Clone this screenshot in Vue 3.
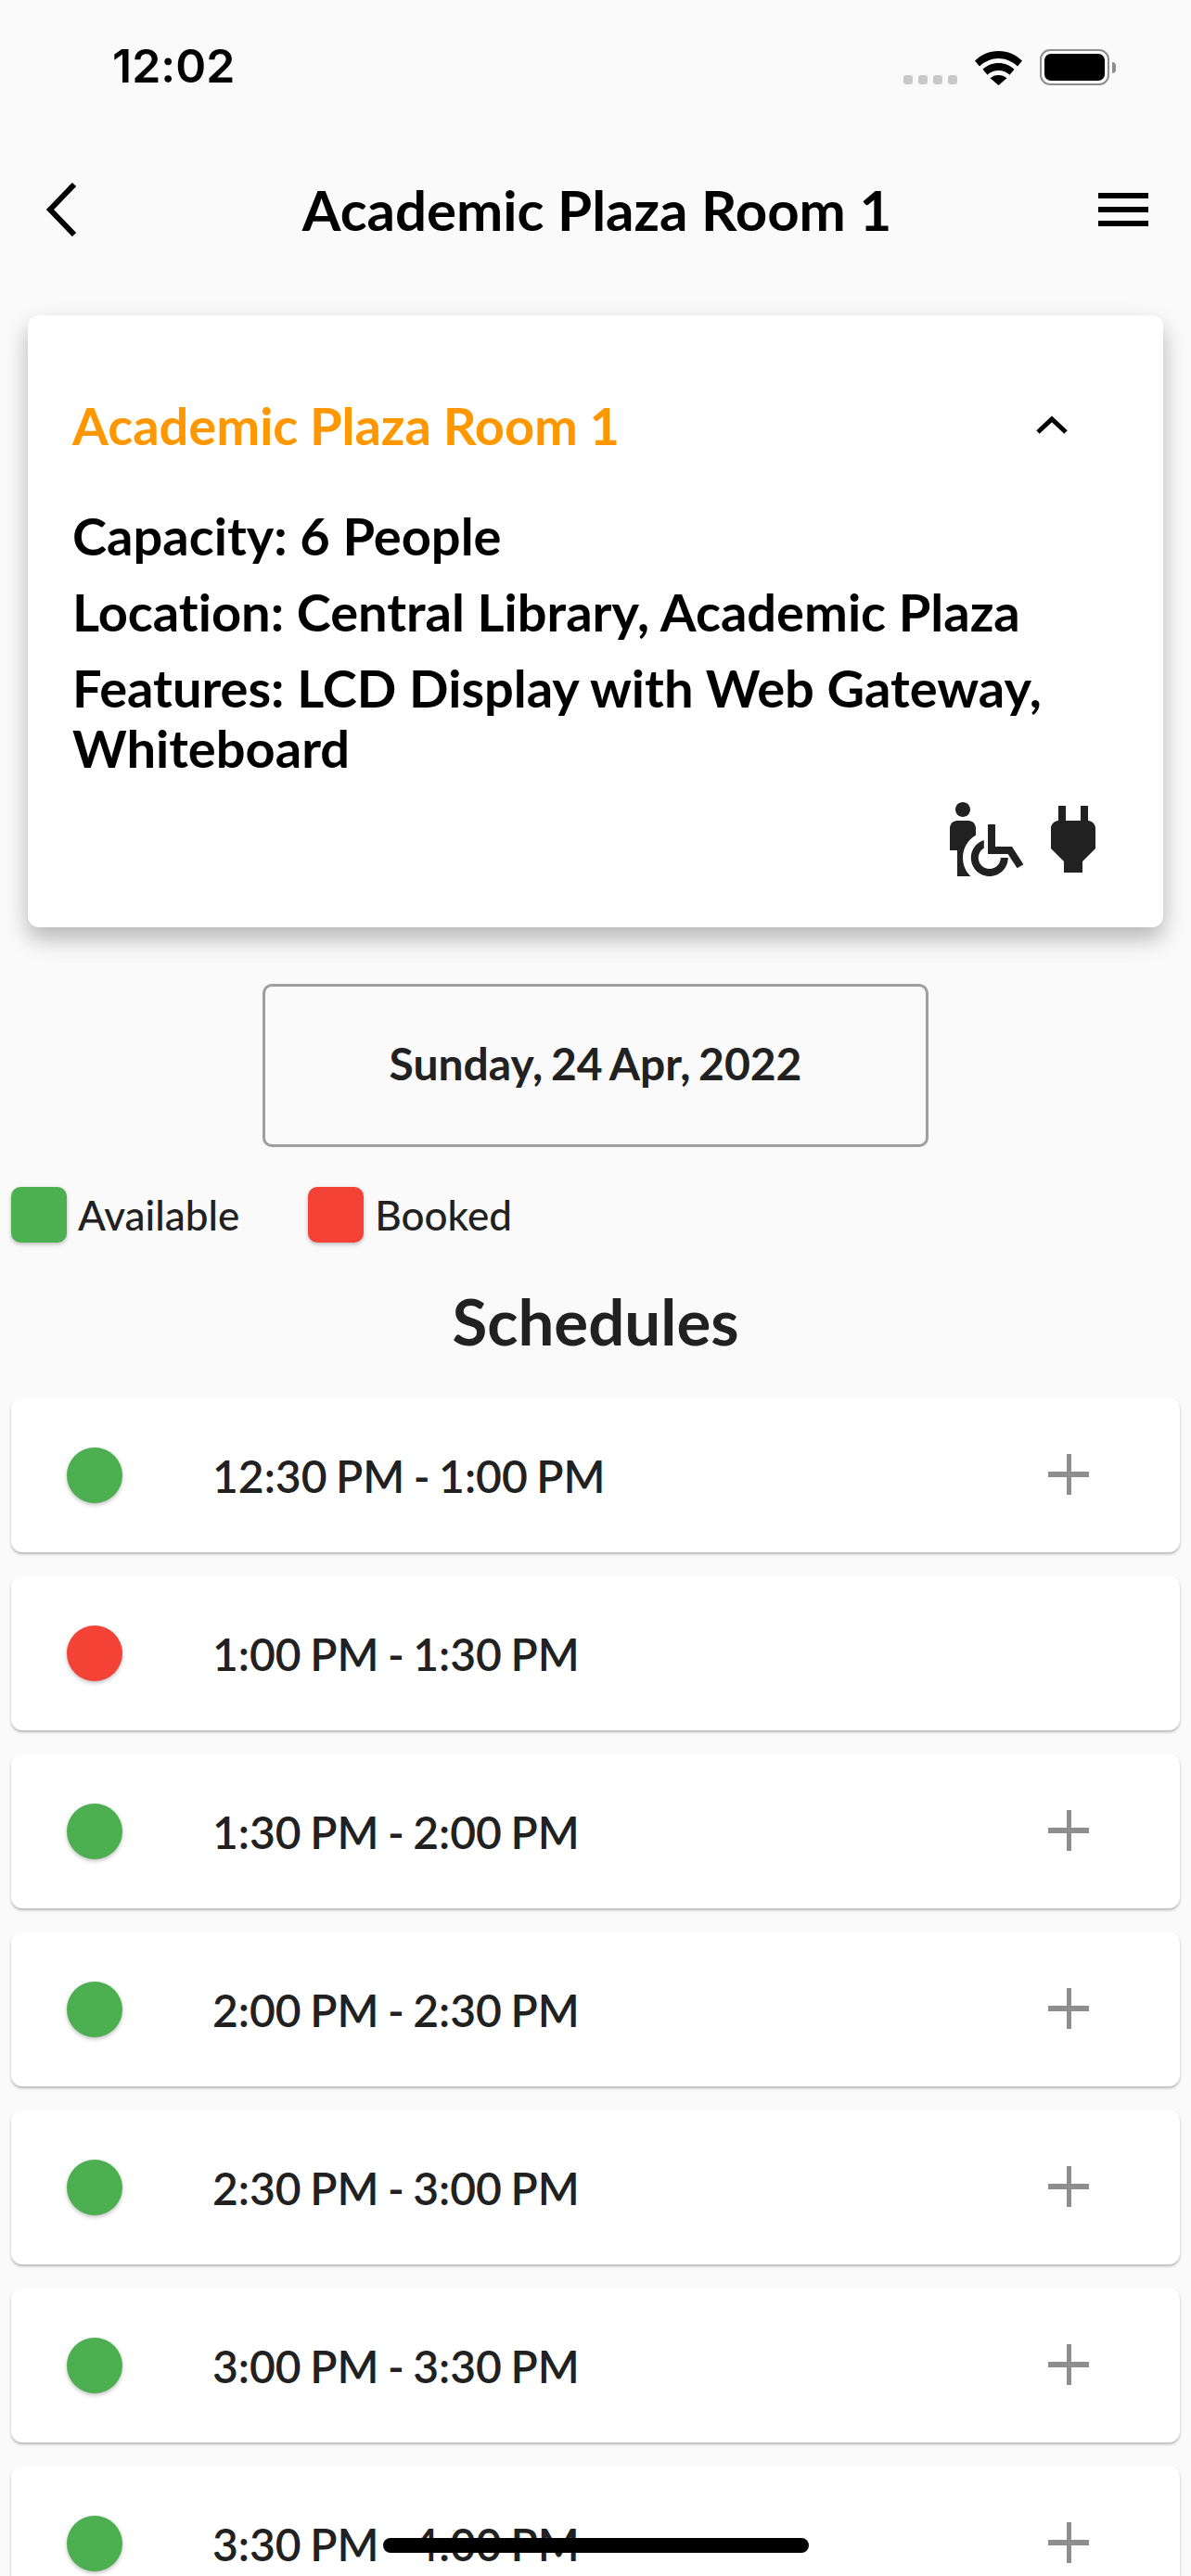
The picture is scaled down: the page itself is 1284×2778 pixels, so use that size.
<template>
  <div class="screen">
    <div class="status-bar">
      <span class="time">12:02</span>
      <div class="status-icons">
        <div class="signal"><i v-for="n in 4" :key="n"></i></div>
        <svg class="wifi" viewBox="0 0 51 37" width="51" height="37">
          <path d="M25.500 0C15.500 0 7 4 0 10.500l5 6C11 11 18 8 25.500 8S40 11 46 16.500l5-6C44 4 35.500 0 25.500 0z" />
          <path d="M25.500 13c-6.500 0-12.500 2.500-17 6.800l5 6c3-3 7.500-4.800 12-4.800s9 1.800 12 4.800l5-6c-4.500-4.300-10.500-6.800-17-6.800z" />
          <path d="M25.500 26c-3.500 0-6.500 1.200-9 3.300L25.500 37l9-7.700c-2.500-2.100-5.500-3.300-9-3.300z" />
        </svg>
        <div class="battery"><div class="battery-fill"></div></div>
        <div class="battery-nub"></div>
      </div>
    </div>

    <header class="nav">
      <button class="nav-btn">
        <svg viewBox="0 0 34 58" width="34" height="58">
          <path d="M31 2 L5 29 L31 56" fill="none" stroke="#000" stroke-width="6" />
        </svg>
      </button>
      <h1 class="nav-title">{{ room.name }}</h1>
      <button class="nav-btn menu">
        <span></span><span></span><span></span>
      </button>
    </header>

    <section class="room-card">
      <div class="room-head">
        <span class="room-name">{{ room.name }}</span>
        <svg class="chevron" viewBox="0 0 36 22" width="36" height="22">
          <path d="M3 19 L18 5 L33 19" fill="none" stroke="#000" stroke-width="5" />
        </svg>
      </div>
      <p class="room-line">Capacity: 6 People</p>
      <p class="room-line">Location: Central Library, Academic Plaza</p>
      <p class="room-line">Features: LCD Display with Web Gateway, Whiteboard</p>
      <div class="room-icons">
        <svg viewBox="0 0 24 24" width="96" height="96">
          <path d="M4.500 4c0-1.110.890-2 2-2s2 .890 2 2-.890 2-2 2-2-.890-2-2zM10 10.950V9c0-1.100-.900-2-2-2H5c-1.100 0-2 .900-2 2v6h2v7h3.500v-.110c-1.240-1.260-2-2.990-2-4.890 0-2.580 1.410-4.840 3.500-6.050z" />
          <path d="M18.700 17c0 2.760-2.240 5-5 5s-5-2.240-5-5c0-2.230 1.480-4.100 3.500-4.740v2.160c-.890.520-1.500 1.470-1.500 2.580 0 1.650 1.350 3 3 3s3-1.350 3-3h2z" />
          <path d="M13.250 8h2v6h4.500l3.100 4.800-1.700 1-2.500-3.800h-5.400z" />
        </svg>
        <svg viewBox="0 0 24 24" width="96" height="96">
          <path d="M16.010 7 16 3h-2v4h-4V3H8v4h-.010C7 6.990 6 7.990 6 8.990v5.490L9.500 18v3h5v-3l3.500-3.510v-5.500c0-1-1-2-1.990-1.990z" />
        </svg>
      </div>
    </section>

    <div class="date-box">Sunday, 24 Apr, 2022</div>

    <div class="legend">
      <div class="legend-item">
        <span class="swatch green"></span>
        <span>Available</span>
      </div>
      <div class="legend-item">
        <span class="swatch red"></span>
        <span>Booked</span>
      </div>
    </div>

    <h2 class="schedules-title">Schedules</h2>

    <ul class="slots">
      <li v-for="slot in slots" :key="slot.time" class="slot">
        <span class="dot" :class="slot.booked ? 'red' : 'green'"></span>
        <span class="slot-time">{{ slot.time }}</span>
        <span v-if="!slot.booked" class="plus"></span>
      </li>
    </ul>

    <div class="home-indicator"></div>
  </div>
</template>

<script setup>
const room = { name: 'Academic Plaza Room 1' };

const slots = [
  { time: '12:30 PM - 1:00 PM', booked: false },
  { time: '1:00 PM - 1:30 PM', booked: true },
  { time: '1:30 PM - 2:00 PM', booked: false },
  { time: '2:00 PM - 2:30 PM', booked: false },
  { time: '2:30 PM - 3:00 PM', booked: false },
  { time: '3:00 PM - 3:30 PM', booked: false },
  { time: '3:30 PM - 4:00 PM', booked: false }
];
</script>

<style>
html, body {
  margin: 0;
  background: #fafafa;
}
</style>

<style scoped>
.screen {
  position: relative;
  width: 1284px;
  height: 2778px;
  overflow: hidden;
  background: #fafafa;
  font-family: Lato, "Liberation Sans", sans-serif;
  font-variant-ligatures: none;
  color: #212121;
}

.status-bar {
  height: 146px;
  display: flex;
  justify-content: space-between;
  align-items: flex-start;
  padding: 46px 81px 0 121px;
  box-sizing: border-box;
}

.time {
  font-family: Inter, sans-serif;
  font-weight: 600;
  font-size: 50px;
  line-height: 50px;
  color: #000;
}

.status-icons {
  display: flex;
  align-items: flex-end;
  margin-top: 7px;
}

.signal {
  display: flex;
  gap: 6px;
  margin-right: 19px;
  margin-bottom: 1px;
}

.signal i {
  width: 10px;
  height: 10px;
  border-radius: 3px;
  background: #c8c8c8;
}

.wifi {
  fill: #000;
  margin-right: 19px;
}

.battery {
  width: 75px;
  height: 39px;
  box-sizing: border-box;
  border: 2px solid #8e8e8e;
  border-radius: 11px;
  padding: 3px;
}

.battery-fill {
  height: 100%;
  background: #000;
  border-radius: 7px;
}

.battery-nub {
  width: 4px;
  height: 12px;
  margin: 0 0 13px 3px;
  background: #8e8e8e;
  border-radius: 0 6px 6px 0;
}

.nav {
  height: 160px;
  display: flex;
  align-items: center;
  justify-content: space-between;
  padding: 0 46px 0 49px;
  margin-bottom: 34px;
}

.nav-btn {
  width: 54px;
  height: 58px;
  padding: 0;
  background: none;
  border: none;
  display: flex;
}

.menu {
  flex-direction: column;
  justify-content: center;
  gap: 9px;
}

.menu span {
  display: block;
  width: 54px;
  height: 6px;
  background: #000;
}

.nav-title {
  margin: 0;
  font-size: 60px;
  font-weight: 700;
  color: #000;
}

.room-card {
  margin: 0 30px;
  padding: 78px 50px 0 48px;
  height: 660px;
  box-sizing: border-box;
  background: #fff;
  border-radius: 12px;
  box-shadow: 0 12px 24px rgba(0, 0, 0, 0.28);
  position: relative;
}

.room-head {
  display: flex;
  justify-content: space-between;
  align-items: center;
  height: 80px;
  margin-bottom: 47px;
}

.room-name {
  font-size: 56px;
  font-weight: 700;
  word-spacing: -1px;
  color: #ff9800;
}

.chevron {
  margin-right: 52px;
}

.room-line {
  margin: 0 0 17px;
  font-size: 56px;
  line-height: 65px;
  font-weight: 700;
  color: #000;
}

.room-icons {
  position: absolute;
  right: 49px;
  bottom: 47px;
  display: flex;
  gap: 1px;
}

.room-icons svg {
  fill: #212121;
}

.date-box {
  width: 718px;
  height: 176px;
  margin: 61px auto 0;
  padding-bottom: 6px;
  box-sizing: border-box;
  border: 3px solid #9e9e9e;
  border-radius: 10px;
  display: flex;
  align-items: center;
  justify-content: center;
  font-size: 48px;
  font-weight: 700;
  word-spacing: -3px;
}

.legend {
  display: flex;
  gap: 74px;
  padding: 43px 12px 0;
}

.legend-item {
  display: flex;
  align-items: center;
  gap: 12px;
  font-size: 44px;
  font-weight: 500;
}

.swatch {
  width: 60px;
  height: 60px;
  border-radius: 10px;
  box-shadow: 0 2px 4px rgba(0, 0, 0, 0.25);
}

.green {
  background: #4caf50;
}

.red {
  background: #f44336;
}

.schedules-title {
  margin: 44px 0 0;
  height: 82px;
  line-height: 82px;
  text-align: center;
  font-size: 69px;
  font-weight: 700;
}

.slots {
  list-style: none;
  margin: 41px 0 0;
  padding: 0 12px;
  display: flex;
  flex-direction: column;
  gap: 25px;
}

.slot {
  height: 167px;
  display: flex;
  align-items: center;
  padding: 0 60px;
  background: #fff;
  border-radius: 12px;
  box-shadow: 0 2px 3px rgba(0, 0, 0, 0.28);
  position: relative;
}

.dot {
  width: 60px;
  height: 60px;
  border-radius: 50%;
  flex-shrink: 0;
  box-shadow: 0 2px 4px rgba(0, 0, 0, 0.25);
  margin-right: 97px;
}

.slot-time {
  padding-top: 2px;
  font-size: 48px;
  font-weight: 600;
  word-spacing: -2.500px;
}

.plus {
  position: absolute;
  left: 1118px;
  top: 61px;
  width: 44px;
  height: 44px;
  background:
    linear-gradient(#8e8e8e, #8e8e8e) center / 44px 6px no-repeat,
    linear-gradient(#8e8e8e, #8e8e8e) center / 5px 44px no-repeat;
}

.home-indicator {
  position: absolute;
  left: 413px;
  top: 2737px;
  width: 459px;
  height: 16px;
  border-radius: 8px;
  background: #000;
}
</style>
